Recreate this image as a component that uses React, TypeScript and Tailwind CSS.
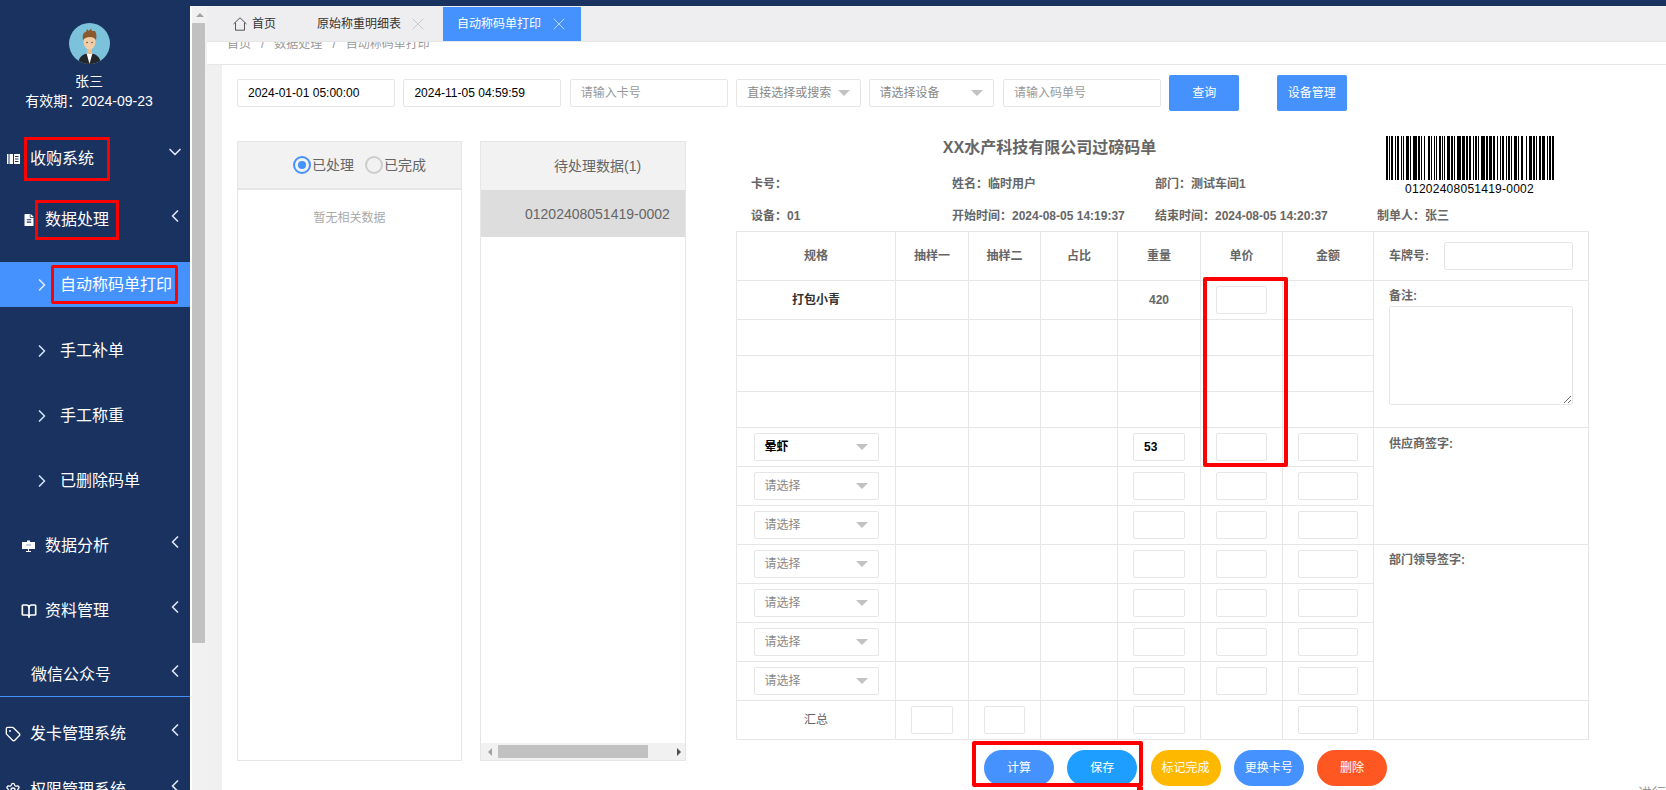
import type { ReactNode } from 'react';
import { BookOpen, ChevronDown, ChevronLeft, ChevronRight, Settings, Tag, X } from 'lucide-react';
import { FaFileAlt } from 'react-icons/fa';

const BARS = [
  2, 1, 1, 1, 2, 2, 1, 1, 2, 2, 1, 1, 1, 2, 3, 1, 1, 2, 4, 1, 2, 1, 1, 2, 1, 3, 2, 1, 1, 2, 1, 1, 1, 2, 2, 1,
  1, 1, 1, 2, 3, 1, 2, 1, 1, 2, 4, 1, 3, 1, 2, 1, 2, 2, 1, 1, 2, 1, 1, 2, 4, 1, 2, 1, 3, 1, 2, 2, 1, 2, 1, 1,
  2, 2, 1, 1, 2, 1, 1, 2, 3, 1, 1, 2, 2, 3, 1, 2, 3, 1, 2, 1, 1, 2, 2, 1, 3, 2, 1, 1, 2, 1, 2,
];

const Barcode = () => {
  let x = 0;
  return (
    <svg width="168" height="44" viewBox="0 0 168 44" className="block">
      {BARS.map((w, i) => {
        const at = x;
        x += w;
        return i % 2 === 0 ? <rect key={i} x={at} y="0" width={w} height="44" fill="#000" /> : null;
      })}
    </svg>
  );
};

const Avatar = () => (
  <svg width="41" height="41" viewBox="0 0 41 41" className="block">
    <defs>
      <clipPath id="avatar-clip">
        <circle cx="20.5" cy="20.5" r="20.5" />
      </clipPath>
    </defs>
    <g clipPath="url(#avatar-clip)">
      <rect width="41" height="41" fill="#7cc2da" />
      <path d="M9 41 C10 33 14 31 20.5 30 C27 31 31 33 32 41 Z" fill="#23262b" />
      <path d="M17.5 30 L20.5 41 L23.5 30 Z" fill="#fff" />
      <rect x="18" y="25" width="5" height="6" fill="#e8b98e" />
      <ellipse cx="20.5" cy="19" rx="6" ry="7.5" fill="#f3cda6" />
      <path d="M14 17 C13 11 15 9 17 9 L18 6 L20 8 L22 5.5 L23 8 L26 8 C28 11 27.5 14 27 17 C25 13 17 13 14 17 Z" fill="#8a5a2e" />
      <circle cx="18" cy="19.5" r="0.7" fill="#4a3320" />
      <circle cx="23" cy="19.5" r="0.7" fill="#4a3320" />
    </g>
  </svg>
);

const LedgerIcon = () => (
  <svg width="13" height="12" viewBox="0 0 13 12" className="mr-[4px] shrink-0">
    <rect x="0" y="1" width="13" height="10" fill="#fff" />
    <path d="M2 1 V11 M6.5 1 V11 M8 3.5 H11.5 M8 6 H11.5 M8 8.5 H11.5" stroke="#1a325f" strokeWidth="1" fill="none" />
  </svg>
);

const BoardIcon = () => (
  <svg width="13" height="12" viewBox="0 0 13 12" className="mr-[10px] shrink-0">
    <path d="M5 0.5 H8 V2 H13 V9 H0 V2 H5 Z" fill="#fff" />
    <path d="M6 9 H7 V11 H9 V12 H4 V11 H6 Z" fill="#fff" />
    <path d="M4 5 H9" stroke="#8fa3c2" strokeWidth="1" />
  </svg>
);

const NavRow = ({ className, children }: { className: string; children: ReactNode }) => (
  <div className={`flex items-center pr-[5px] text-base text-white ${className}`}>{children}</div>
);

const Back = () => <ChevronLeft size={20} strokeWidth={2} className="ml-auto -translate-y-1 text-[#dfe8f5]" />;

const SubItem = ({ label }: { label: string }) => (
  <NavRow className="h-[65px] pl-[32px]">
    <ChevronRight size={20} className="text-[#cfe0f5]" />
    <span className="ml-[8px]">{label}</span>
  </NavRow>
);

const Sidebar = () => (
  <aside className="flex w-[190px] shrink-0 flex-col bg-[#1a325f]">
    <div className="flex flex-col items-center pr-[12px] pt-[23px] text-sm leading-5 text-white">
      <Avatar />
      <p className="mt-[7px]">张三</p>
      <p>有效期：2024-09-23</p>
    </div>
    <nav className="mt-[16px]">
      <NavRow className="h-[63px] pl-[7px]">
        <LedgerIcon />
        <span className="flex h-[44px] items-center border-[3px] border-[#ff0000] pl-[3px] pr-[13px]">收购系统</span>
        <ChevronDown size={20} className="ml-auto -translate-y-[7px] text-[#dfe8f5]" />
      </NavRow>
      <NavRow className="h-[60px] pl-[23px]">
        <FaFileAlt size={12} className="mr-0" />
        <span className="flex h-[40px] items-center border-[3px] border-[#ff0000] pl-[7px] pr-[7px]">数据处理</span>
        <Back />
      </NavRow>
      <div className="mb-[11px] mt-[12px] flex h-[45px] items-center bg-[#4592ff] pl-[32px] text-base text-white">
        <ChevronRight size={20} className="text-[#dcebff]" />
        <span className="-ml-px flex h-[39px] items-center rounded-[2px] border-[3px] border-[#ff0000] pl-[6px] pr-[3px]">
          自动称码单打印
        </span>
      </div>
      <SubItem label="手工补单" />
      <SubItem label="手工称重" />
      <SubItem label="已删除码单" />
      <NavRow className="h-[65px] pl-[22px]">
        <BoardIcon />
        <span>数据分析</span>
        <Back />
      </NavRow>
      <NavRow className="h-[65px] pl-[21px]">
        <BookOpen size={16} strokeWidth={2.5} className="mr-[8px]" />
        <span>资料管理</span>
        <Back />
      </NavRow>
      <NavRow className="h-[54px] border-b border-[#4592ff] pl-[31px] pt-[10px]">
        <span>微信公众号</span>
        <Back />
      </NavRow>
      <NavRow className="mt-[9px] h-[56px] pl-[5px]">
        <Tag size={16} className="mr-[9px]" />
        <span>发卡管理系统</span>
        <Back />
      </NavRow>
      <NavRow className="h-[56px] pl-[5px]">
        <Settings size={16} className="mr-[9px]" />
        <span>权限管理系统</span>
        <Back />
      </NavRow>
    </nav>
  </aside>
);

const PageScrollbar = () => (
  <div className="flex w-[17px] shrink-0 flex-col border-l-2 border-white bg-[#f1f1f1]">
    <div className="flex h-[17px] items-center justify-center">
      <span className="h-0 w-0 border-x-[4px] border-b-[4px] border-x-transparent border-b-[#a3a3a3]" />
    </div>
    <div className="h-[620px] w-[13px] bg-[#c1c1c1]" />
  </div>
);

const Tabs = () => (
  <div className="flex h-9 shrink-0 items-end border-b border-[#e6e6e6] bg-[#eeeef0] text-xs">
    <div className="flex h-[34px] w-[236px] items-center pl-[26px] text-[#333]">
      <svg width="14" height="14" viewBox="0 0 14 14" fill="none" stroke="#555" strokeWidth="1">
        <path d="M0.5 7 L7 0.8 L13.5 7 M2.5 5.5 V13.2 H11.5 V5.5" />
      </svg>
      <span className="ml-[5px]">首页</span>
      <span className="ml-[41px] whitespace-nowrap">原始称重明细表</span>
      <X size={20} strokeWidth={1} className="ml-[7px] shrink-0 text-[#c4c4c4]" />
    </div>
    <div className="flex h-[34px] w-[138px] items-center bg-[#4592ff] pl-[14px] text-white">
      <span className="whitespace-nowrap">自动称码单打印</span>
      <X size={20} strokeWidth={1} className="ml-[8px] shrink-0 text-[#d5e6ff]" />
    </div>
  </div>
);

const Breadcrumb = () => (
  <div className="h-[23px] shrink-0 overflow-hidden border-b border-[#e6e6e6] bg-white pl-[20px] text-xs text-[#999]">
    <p className="-mt-[6px] flex leading-4">
      <span>首页</span>
      <span className="mx-[10px]">/</span>
      <span>数据处理</span>
      <span className="mx-[10px]">/</span>
      <span>自动称码单打印</span>
    </p>
  </div>
);

const Box = ({ className, value }: { className: string; value?: string }) => (
  <input
    defaultValue={value}
    className={`block h-7 rounded-[2px] border border-[#e6e6e6] bg-white text-xs text-black outline-none ${className}`}
  />
);

const Field = ({ className, placeholder, value }: { className: string; placeholder?: string; value?: string }) => (
  <input
    defaultValue={value}
    placeholder={placeholder}
    className={`block h-7 shrink-0 rounded-[2px] border border-[#e6e6e6] bg-white pl-[10px] text-xs text-black outline-none placeholder:text-[#999] ${className}`}
  />
);

const Select = ({ label, className, strong }: { label: string; className: string; strong?: boolean }) => (
  <div
    className={`flex h-7 shrink-0 items-center justify-between rounded-[2px] border border-[#e6e6e6] bg-white pl-[10px] pr-[10px] text-left text-xs ${className} ${
      strong ? 'font-bold text-black' : 'font-normal text-[#888]'
    }`}
  >
    <span>{label}</span>
    <span className="h-0 w-0 border-x-[6px] border-t-[6px] border-x-transparent border-t-[#c2c2c2]" />
  </div>
);

const FilterBar = () => (
  <div className="flex h-9 items-center gap-[8.4px]">
    <Field className="w-[158px]" value="2024-01-01 05:00:00" />
    <Field className="w-[158px]" value="2024-11-05 04:59:59" />
    <Field className="w-[158px]" placeholder="请输入卡号" />
    <Select className="w-[125px]" label="直接选择或搜索" />
    <Select className="-ml-px w-[125px]" label="请选择设备" />
    <Field className="ml-px w-[158px]" placeholder="请输入码单号" />
    <button className="h-9 w-[70px] rounded-[2px] bg-[#4592ff] text-xs text-white">查询</button>
    <button className="ml-[29px] h-9 w-[70px] rounded-[2px] bg-[#4592ff] text-xs text-white">设备管理</button>
  </div>
);

const Radio = ({ label, on }: { label: string; on?: boolean }) => (
  <label className="flex items-center">
    <span
      className={`flex h-[18px] w-[18px] items-center justify-center rounded-full border-2 ${
        on ? 'border-[#4592ff]' : 'border-[#ccc]'
      }`}
    >
      {on && <span className="h-2 w-2 rounded-full bg-[#4592ff]" />}
    </span>
    <span className="ml-px">{label}</span>
  </label>
);

const SidePanels = () => (
  <div className="mt-[5px] flex h-[620px] shrink-0 gap-[18px] text-[#666]">
    <div className="w-[225px] border border-[#e6e6e6]">
      <div className="flex h-[48px] items-center gap-[11px] border-b-2 border-[#e6e6e6] bg-[#f2f2f2] pl-[55px] text-sm">
        <Radio label="已处理" on />
        <Radio label="已完成" />
      </div>
      <p className="mt-[20px] text-center text-xs leading-4 text-[#aaa]">暂无相关数据</p>
    </div>
    <div className="flex w-[206px] flex-col border border-[#e6e6e6]">
      <div className="flex h-[48px] items-center bg-[#f2f2f2] pl-[73px] text-sm">待处理数据(1)</div>
      <div className="flex h-[47px] items-center bg-[#ddd] pl-[44px] text-sm">01202408051419-0002</div>
      <div className="mt-auto flex h-[17px] items-center bg-[#f1f1f1] pl-[7px]">
        <span className="h-0 w-0 border-y-[4px] border-r-[4px] border-y-transparent border-r-[#a3a3a3]" />
        <span className="ml-[6px] h-[13px] w-[150px] bg-[#c1c1c1]" />
        <span className="ml-[29px] h-0 w-0 border-y-[4px] border-l-[4px] border-y-transparent border-l-[#505050]" />
      </div>
    </div>
  </div>
);

const SelectCell = ({ label, strong }: { label: string; strong?: boolean }) => (
  <td className="border border-[#e6e6e6]">
    <Select className="mx-auto w-[125px]" label={label} strong={strong} />
  </td>
);

const Blank = () => <td className="border border-[#e6e6e6]" />;

const InputCell = ({ className, value }: { className: string; value?: string }) => (
  <td className="border border-[#e6e6e6]">
    <Box className={`mx-auto pl-[10px] font-bold ${className}`} value={value} />
  </td>
);

// numeric cells shared by the lower rows
const GoodsCells = ({ weight }: { weight?: string }) => (
  <>
    <Blank />
    <Blank />
    <Blank />
    <InputCell className="w-[52px]" value={weight} />
    <InputCell className="w-[51px]" />
    <InputCell className="w-[60px]" />
  </>
);

const Report = () => (
  <div className="relative w-[852px] text-xs">
    <table className="w-[852px] table-fixed border-collapse text-center text-[#666]">
      <colgroup>
        <col className="w-[159px]" />
        <col className="w-[73px]" />
        <col className="w-[72px]" />
        <col className="w-[77px]" />
        <col className="w-[83px]" />
        <col className="w-[82px]" />
        <col className="w-[91px]" />
        <col className="w-[215px]" />
      </colgroup>
      <tbody>
        <tr className="h-[49px] font-bold">
          {['规格', '抽样一', '抽样二', '占比', '重量', '单价', '金额'].map((name) => (
            <td key={name} className="border border-[#e6e6e6]">
              {name}
            </td>
          ))}
          <td className="border border-[#e6e6e6] pl-[15px] text-left">
            <div className="flex items-center">
              <span className="w-[55px]">车牌号:</span>
              <Box className="w-[129px] pl-[10px]" />
            </div>
          </td>
        </tr>
        <tr className="h-[39px] font-bold">
          <td className="border border-[#e6e6e6] text-[#333]">打包小青</td>
          <Blank />
          <Blank />
          <Blank />
          <td className="border border-[#e6e6e6]">420</td>
          <InputCell className="w-[51px]" />
          <Blank />
          <td rowSpan={4} className="border border-[#e6e6e6] pl-[15px] pt-[7px] text-left align-top font-bold">
            <p className="leading-4">备注:</p>
            <textarea className="mt-[2px] block h-[99px] w-[184px] rounded-[2px] border border-[#e6e6e6] outline-none" />
          </td>
        </tr>
        {[0, 1, 2].map((row) => (
          <tr key={row} className="h-9">
            <Blank />
            <Blank />
            <Blank />
            <Blank />
            <Blank />
            <Blank />
            <Blank />
          </tr>
        ))}
        <tr className="h-[39px]">
          <SelectCell label="晕虾" strong />
          <GoodsCells weight="53" />
          <td rowSpan={3} className="border border-[#e6e6e6] pl-[15px] pt-[8px] text-left align-top font-bold">
            <p className="leading-4">供应商签字:</p>
          </td>
        </tr>
        {[0, 1].map((row) => (
          <tr key={row} className="h-[39px]">
            <SelectCell label="请选择" />
            <GoodsCells />
          </tr>
        ))}
        <tr className="h-[39px]">
          <SelectCell label="请选择" />
          <GoodsCells />
          <td rowSpan={4} className="border border-[#e6e6e6] pl-[15px] pt-[7px] text-left align-top font-bold">
            <p className="leading-4">部门领导签字:</p>
          </td>
        </tr>
        {[0, 1, 2].map((row) => (
          <tr key={row} className="h-[39px]">
            <SelectCell label="请选择" />
            <GoodsCells />
          </tr>
        ))}
        <tr className="h-[39px]">
          <td className="border border-[#e6e6e6]">汇总</td>
          <InputCell className="w-[42px]" />
          <InputCell className="w-[41px]" />
          <Blank />
          <InputCell className="w-[52px]" />
          <Blank />
          <InputCell className="w-[60px]" />
          <Blank />
        </tr>
      </tbody>
    </table>
    <div className="absolute left-[467px] top-[46px] h-[190px] w-[85px] rounded-[2px] border-4 border-[#ff0000]" />
  </div>
);

const Actions = () => (
  <div className="relative mt-[10px] w-[852px]">
    <div className="ml-[248px] flex gap-[13.25px] text-xs text-white">
      <button className="h-9 w-[70px] rounded-[18px] bg-[#4592ff]">计算</button>
      <button className="h-9 w-[70px] rounded-[18px] bg-[#1e9fff]">保存</button>
      <button className="h-9 w-[70px] rounded-[18px] bg-[#ffb800]">标记完成</button>
      <button className="h-9 w-[70px] rounded-[18px] bg-[#4592ff]">更换卡号</button>
      <button className="h-9 w-[70px] rounded-[18px] bg-[#ff5722]">删除</button>
    </div>
    <div className="absolute -top-[9px] left-[236px] h-[46px] w-[171px] rounded-[2px] border-4 border-[#ff0000]" />
    <div className="absolute left-[401px] top-[37px] h-1 w-[6px] bg-[#ff0000]" />
  </div>
);

const ReportHeader = () => (
  <div className="grid w-[852px] grid-cols-[216px_203px_222px_211px] grid-rows-[31px_34px_30px] items-center text-xs font-bold text-[#666]">
    <h1 className="col-span-3 h-[31px] pr-[14px] text-center text-base leading-6">XX水产科技有限公司过磅码单</h1>
    <div className="row-span-2 self-start pl-[9px]">
      <Barcode />
      <p className="mt-px w-[167px] text-center font-normal tracking-[0.25px] text-black">01202408051419-0002</p>
    </div>
    <p className="pl-[15px]">卡号：</p>
    <p>姓名：临时用户</p>
    <p>部门：测试车间1</p>
    <p className="pl-[15px]">设备：01</p>
    <p className="whitespace-nowrap">开始时间：2024-08-05 14:19:37</p>
    <p className="whitespace-nowrap">结束时间：2024-08-05 14:20:37</p>
    <p>制单人：张三</p>
  </div>
);

export default function App() {
  return (
    <div className="flex h-[790px] w-[1666px] overflow-hidden bg-white font-['Liberation_Sans','Noto_Sans_CJK_SC',sans-serif]">
      <Sidebar />
      <div className="flex min-w-0 flex-1 flex-col">
        <div className="h-[6px] shrink-0 bg-[#1a325f]" />
        <div className="flex min-h-0 flex-1">
          <PageScrollbar />
          <main className="flex min-w-0 flex-1 flex-col">
            <Tabs />
            <Breadcrumb />
            <div className="min-h-0 flex-1 bg-[#f0f0f0] pl-[15px]">
              <div className="h-full bg-white pl-[15px] pt-[10px]">
                <FilterBar />
                <div className="mt-[25px] flex gap-[50px]">
                  <SidePanels />
                  <div className="flex-1">
                    <ReportHeader />
                    <Report />
                    <Actions />
                    <p className="text-right text-sm leading-[14px] text-[#999]">进行</p>
                  </div>
                </div>
              </div>
            </div>
          </main>
        </div>
      </div>
    </div>
  );
}
